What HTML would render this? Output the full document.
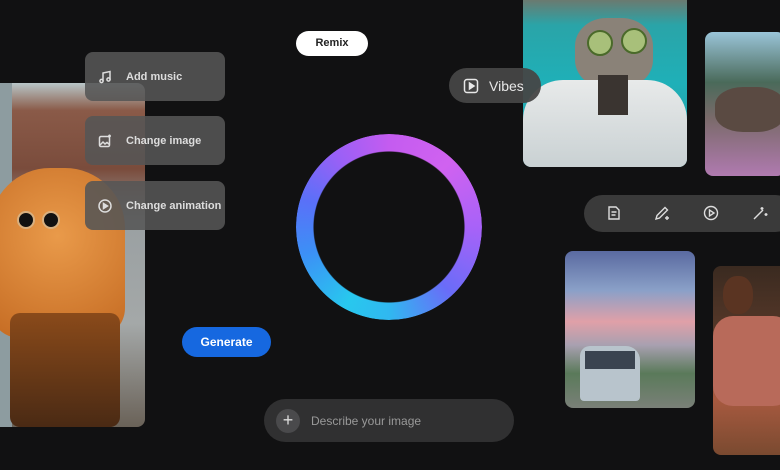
<!DOCTYPE html>
<html><head><style>
body{margin:0;width:780px;height:470px;background:#111112;position:relative;overflow:hidden;font-family:"Liberation Sans",sans-serif}
.a{position:absolute}
.card{position:absolute;left:85px;width:140px;height:49px;background:rgba(85,85,85,.88);border-radius:8px;color:#ddd;font-size:11px;font-weight:bold;display:flex;align-items:center;white-space:nowrap}
.card svg{margin-left:13px;margin-right:14px;flex-shrink:0}
</style></head><body>
<div class="a" style="left:0;top:83px;width:145px;height:344px;border-radius:0 8px 8px 0;overflow:hidden;background:linear-gradient(180deg,#b8c6c8 0,#8a5a48 8%,#7a4c3c 25%,#9aa0a2 40%,#a4a8a8 70%,#6a6258 100%)">
 <div class="a" style="left:0;top:0;width:12px;height:344px;background:#8d9ca0"></div>
 <div class="a" style="left:-10px;top:85px;width:135px;height:170px;border-radius:60px 60px 30px 30px;background:radial-gradient(circle at 50% 40%,#e99a4a,#c46a22)"></div>
 <div class="a" style="left:17px;top:128px;width:14px;height:14px;border-radius:50%;background:#111;border:2px solid #d8b080"></div>
 <div class="a" style="left:42px;top:128px;width:14px;height:14px;border-radius:50%;background:#111;border:2px solid #d8b080"></div>
 <div class="a" style="left:10px;top:230px;width:110px;height:114px;background:linear-gradient(#8a4a1a,#4a2a14);border-radius:10px"></div>
</div>
<div class="card" style="top:52px"><svg width="14" height="14" viewBox="0 0 14 14" fill="none" stroke="#ddd" stroke-width="1.5"><path d="M5 11V3l7-1.5V9.5"/><circle cx="3.5" cy="11" r="1.6"/><circle cx="10.5" cy="9.5" r="1.6"/></svg>Add music</div>
<div class="card" style="top:116px"><svg width="14" height="14" viewBox="0 0 14 14" fill="none" stroke="#ddd" stroke-width="1.5"><rect x="1.5" y="2.5" width="10" height="10" rx="1.5"/><path d="M2 11l3-3 2 2 2-1.5 2.5 2"/><path d="M11.5 0.5v3M10 2h3"/></svg>Change image</div>
<div class="card" style="top:181px"><svg width="14" height="14" viewBox="0 0 14 14" fill="none" stroke="#ddd" stroke-width="1.5"><circle cx="7" cy="7" r="6"/><path d="M5.5 4.5v5l4-2.5z" fill="#ddd"/></svg>Change animation</div>
<div class="a" style="left:296px;top:31px;width:72px;height:25px;background:#fff;border-radius:13px;color:#222;font-size:11px;font-weight:bold;text-align:center;line-height:25px">Remix</div>
<div class="a" style="left:523px;top:0;width:164px;height:167px;border-radius:0 0 8px 8px;overflow:hidden;background:linear-gradient(180deg,#6a7a70 0,#2aa4a8 15%,#1fb0b8 50%,#2a9aa0 100%)">
 <div class="a" style="left:52px;top:18px;width:78px;height:70px;border-radius:40%;background:#8a8278"></div>
 <div class="a" style="left:64px;top:30px;width:22px;height:22px;border-radius:50%;background:#a8c07a;border:2px solid #4a6a2a"></div>
 <div class="a" style="left:98px;top:28px;width:22px;height:22px;border-radius:50%;background:#a8c07a;border:2px solid #4a6a2a"></div>
 <div class="a" style="left:0;top:80px;width:164px;height:90px;border-radius:40px 40px 0 0;background:linear-gradient(#e8eaea,#c8d0d2)"></div>
 <div class="a" style="left:75px;top:75px;width:30px;height:40px;background:#3a3430"></div>
</div>
<div class="a" style="left:449px;top:68px;width:92px;height:35px;background:rgba(70,70,70,.95);border-radius:18px;color:#e8e8e8;font-size:14px;display:flex;align-items:center"><svg style="margin:0 10px 0 14px" width="16" height="16" viewBox="0 0 16 16" fill="none" stroke="#e8e8e8" stroke-width="1.5"><rect x="1.5" y="1.5" width="13" height="13" rx="2.5"/><path d="M6.5 5v6l4.5-3z" fill="#e8e8e8"/></svg>Vibes</div>
<div class="a" style="left:705px;top:32px;width:80px;height:144px;border-radius:8px;overflow:hidden;background:linear-gradient(180deg,#9ac4d8 0,#4a6a5a 35%,#7a6a6a 60%,#b07ab0 100%)">
 <div class="a" style="left:10px;top:55px;width:70px;height:45px;border-radius:40%;background:#5a4a42"></div>
</div>
<div class="a" style="left:296px;top:134px;width:186px;height:186px;border-radius:50%;background:conic-gradient(from 0deg,#c45cf0,#d062f0 12%,#a862f8 25%,#6a6cf8 38%,#30b8f0 50%,#28c8ee 58%,#3c90f6 70%,#5a70f8 80%,#9a60f6 90%,#c45cf0 100%);-webkit-mask:radial-gradient(circle,transparent 75px,#000 76px);mask:radial-gradient(circle,transparent 75px,#000 76px)"></div>
<div class="a" style="left:584px;top:195px;width:210px;height:37px;border-radius:19px;background:#3a3a3a"></div>
<svg class="a" style="left:606px;top:205px" width="16" height="16" viewBox="0 0 16 16" fill="none" stroke="#ddd" stroke-width="1.4"><path d="M3 2h7l3 3v9H3z"/><path d="M5.5 7h5M5.5 10h4"/></svg>
<svg class="a" style="left:654px;top:205px" width="16" height="16" viewBox="0 0 16 16" fill="none" stroke="#ddd" stroke-width="1.4"><path d="M2 14l1-3.5 8-8 2.5 2.5-8 8z"/><path d="M13 11v4M11 13h4"/></svg>
<svg class="a" style="left:703px;top:205px" width="16" height="16" viewBox="0 0 16 16" fill="none" stroke="#ddd" stroke-width="1.4"><circle cx="8" cy="8" r="6.5"/><path d="M6.5 5v6l4.5-3z"/></svg>
<svg class="a" style="left:752px;top:205px" width="16" height="16" viewBox="0 0 16 16" fill="none" stroke="#ddd" stroke-width="1.4"><path d="M2 14l9-9"/><path d="M10 2v3M8.5 3.5h3M14 8v3M12.5 9.5h3"/></svg>
<div class="a" style="left:565px;top:251px;width:130px;height:157px;border-radius:8px;overflow:hidden;background:linear-gradient(180deg,#5a6aa0 0,#8aa0c8 25%,#e0a0a8 45%,#a8a0b0 60%,#5a7a5a 78%,#7a8078 100%)">
 <div class="a" style="left:15px;top:95px;width:60px;height:55px;border-radius:10px 14px 4px 4px;background:#b8c4cc"></div>
 <div class="a" style="left:20px;top:100px;width:50px;height:18px;background:#3a4450"></div>
</div>
<div class="a" style="left:713px;top:266px;width:80px;height:189px;border-radius:8px;overflow:hidden;background:linear-gradient(180deg,#3a2a20 0,#5a3a2a 40%,#a85a40 70%,#7a4a30 100%)">
 <div class="a" style="left:10px;top:10px;width:30px;height:38px;border-radius:45%;background:#5a3422"></div>
 <div class="a" style="left:0;top:50px;width:80px;height:90px;border-radius:20px;background:#b86a5a"></div>
</div>
<div class="a" style="left:182px;top:327px;width:89px;height:30px;border-radius:15px;background:#1668e0;color:#fff;font-size:12px;font-weight:bold;text-align:center;line-height:30px">Generate</div>
<div class="a" style="left:264px;top:399px;width:250px;height:43px;border-radius:22px;background:#303031;color:#999;font-size:12px;display:flex;align-items:center">
 <div style="width:24px;height:24px;border-radius:50%;background:#4a4a4c;margin:0 11px 0 12px;color:#ddd;font-size:18px;line-height:23px;text-align:center">+</div>Describe your image</div>
</body></html>
